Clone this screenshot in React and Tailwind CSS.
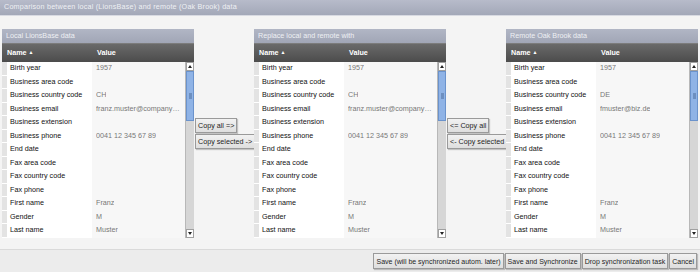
import React from 'react'

const localRows = [
    ['Birth year', '1957'],
    ['Business area code', ''],
    ['Business country code', 'CH'],
    ['Business email', 'franz.muster@company-mail.ch'],
    ['Business extension', ''],
    ['Business phone', '0041 12 345 67 89'],
    ['End date', ''],
    ['Fax area code', ''],
    ['Fax country code', ''],
    ['Fax phone', ''],
    ['First name', 'Franz'],
    ['Gender', 'M'],
    ['Last name', 'Muster'],
]

const remoteRows = [
    ['Birth year', '1957'],
    ['Business area code', ''],
    ['Business country code', 'DE'],
    ['Business email', 'fmuster@biz.de'],
    ['Business extension', ''],
    ['Business phone', '0041 12 345 67 89'],
    ['End date', ''],
    ['Fax area code', ''],
    ['Fax country code', ''],
    ['Fax phone', ''],
    ['First name', 'Franz'],
    ['Gender', 'M'],
    ['Last name', 'Muster'],
]

const Scrollbar = () => (
    <div className="w-[9px] shrink-0 flex flex-col bg-[#d6d6d6] border-l border-[#b8b8b8]">
        <div className="h-[9px] bg-white border border-[#a0a0a0] flex items-center justify-center">
            <div className="w-0 h-0 border-l-[2.5px] border-r-[2.5px] border-b-[3px] border-l-transparent border-r-transparent border-b-[#222]" />
        </div>
        <div className="h-[50px] bg-[#8fb3e6] border border-[#6b93cc] flex items-center justify-center">
            <div className="w-[3px] h-[6px] bg-[#6d8fc0]" />
        </div>
        <div className="flex-1" />
        <div className="h-[9px] bg-white border border-[#a0a0a0] flex items-center justify-center">
            <div className="w-0 h-0 border-l-[2.5px] border-r-[2.5px] border-t-[3px] border-l-transparent border-r-transparent border-t-[#222]" />
        </div>
    </div>
)

const Panel = ({ title, rows }) => (
    <div className="w-[192px] shrink-0 flex flex-col">
        <div className="h-[14px] bg-gradient-to-b from-[#b1b6c5] to-[#a1a6b6] text-[#eef0f4] px-[4px] flex items-center">
            {title}
        </div>
        <div className="h-[19px] bg-gradient-to-b from-[#6a6a6a] to-[#4c4c4c] border-t border-[#7c7c7c] text-white font-bold flex items-center">
            <div className="w-[90px] pl-[5px]">Name <span className="text-[5px] align-middle">▲</span></div>
            <div className="pl-[5px]">Value</div>
        </div>
        <div className="h-[176px] flex">
            <div className="flex-1 min-w-0 flex flex-col overflow-hidden">
                {rows.map(([name, value]) => (
                    <div key={name} className="h-[13.5px] flex min-w-0">
                        <div className="w-[5px] shrink-0 bg-[#e3e3e3] border-b border-white" />
                        <div className="w-[85px] shrink-0 bg-white text-[#111] pl-[3px] flex items-center whitespace-nowrap">{name}</div>
                        <div className="flex-1 bg-[#f7f7f7] text-[#777] pl-[4px] pr-[4px] flex items-center min-w-0 overflow-hidden">
                            <span className="truncate">{value}</span>
                        </div>
                    </div>
                ))}
            </div>
            <Scrollbar />
        </div>
    </div>
)

const Button = ({ children, className = '' }) => (
    <button className={'h-[15px] px-[2px] bg-gradient-to-b from-[#f2f2f2] to-[#dedede] border border-[#9a9a9a] shadow-[1px_1px_1px_rgba(0,0,0,0.2)] text-[#1e1e1e] whitespace-nowrap text-left leading-none ' + className}>
        {children}
    </button>
)

const App = () => {
    return (
        <div
            className="w-[700px] h-[272px] bg-[#f4f4f4] flex flex-col overflow-hidden text-[7.2px]"
            style={{ fontFamily: '"Liberation Sans", Arial, sans-serif' }}
        >
            <div className="h-[16px] bg-gradient-to-b from-[#b7bbca] to-[#a3a8b8] border-b border-[#d8dae2] text-[#eef0f4] px-[4px] flex items-center tracking-[0.2px]">
                Comparison between local (LionsBase) and remote (Oak Brook) data
            </div>

            <div className="flex px-[2px] mt-[13px]">
                <Panel title="Local LionsBase data" rows={localRows} />
                <div className="w-[60px] shrink-0 pt-[89px] pl-[1px] flex flex-col items-start gap-[1px]">
                    <Button>Copy all =&gt;</Button>
                    <Button>Copy selected -&gt;</Button>
                </div>
                <Panel title="Replace local and remote with" rows={localRows} />
                <div className="w-[60px] shrink-0 pt-[89px] pl-[1px] flex flex-col items-start gap-[1px]">
                    <Button>&lt;= Copy all</Button>
                    <Button>&lt;- Copy selected</Button>
                </div>
                <Panel title="Remote Oak Brook data" rows={remoteRows} />
            </div>

            <div className="mt-auto h-[23px] bg-[#ececec] border-t border-[#dadada] flex items-center justify-end gap-[1px] pr-[3px] text-[7px]">
                <Button className="h-[16px]">Save (will be synchronized autom. later)</Button>
                <Button className="h-[16px]">Save and Synchronize</Button>
                <Button className="h-[16px]">Drop synchronization task</Button>
                <Button className="h-[16px]">Cancel</Button>
            </div>
        </div>
    )
}

export default App
